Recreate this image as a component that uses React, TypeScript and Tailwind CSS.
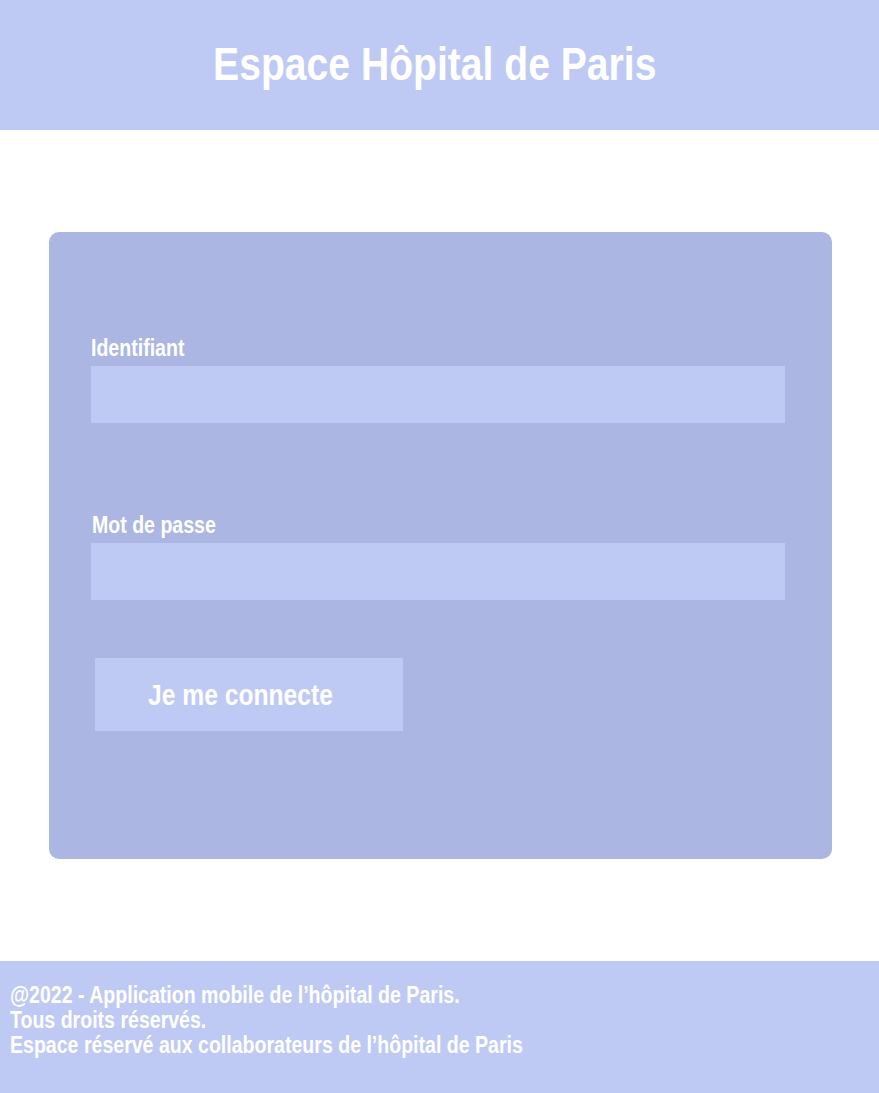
import React from "react";

const font = { fontFamily: '"Liberation Sans", Arial, sans-serif' };

// the reference type is a horizontally condensed Arial bold
const Narrow = ({ children, center = false }: { children: React.ReactNode; center?: boolean }) => (
  <span className={`inline-block scale-x-[0.85] ${center ? "origin-center" : "origin-left"}`}>{children}</span>
);

export default function App() {
  return (
    <div className="min-h-screen bg-white flex flex-col" style={font}>
      <header className="h-[130px] bg-[#bfcaf4] flex items-center justify-center pr-[9px] pb-[2px]">
        <h1 className="text-[46px] font-bold text-white whitespace-nowrap">
          <Narrow center>Espace Hôpital de Paris</Narrow>
        </h1>
      </header>

      <main className="pl-[49px] pr-[47px] pt-[102px] pb-[102px]">
        <div className="bg-[#abb7e2] rounded-[10px] h-[627px] pl-[42px] pr-[47px] pt-[104px]">
          <label className="block text-[23px] font-bold text-white leading-[24px]">
            <Narrow>Identifiant</Narrow>
          </label>
          <input type="text" className="block w-full h-[57px] mt-[6px] bg-[#bfcaf4] outline-none" />

          <label className="block text-[23px] font-bold text-white leading-[24px] mt-[90px] ml-[1px]">
            <Narrow>Mot de passe</Narrow>
          </label>
          <input type="password" className="block w-full h-[57px] mt-[6px] bg-[#bfcaf4] outline-none" />

          <button className="mt-[58px] ml-[4px] w-[308px] h-[73px] bg-[#bfcaf4] text-white text-[29px] font-bold pl-[53px] pt-[3px] text-left">
            <Narrow>Je me connecte</Narrow>
          </button>
        </div>
      </main>

      <footer className="h-[132px] bg-[#bfcaf4] px-[10px] pt-[22px] text-white text-[23px] font-bold leading-[25px] whitespace-nowrap">
        <p><Narrow>@2022 - Application mobile de l’hôpital de Paris.</Narrow></p>
        <p><Narrow>Tous droits réservés.</Narrow></p>
        <p><Narrow>Espace réservé aux collaborateurs de l’hôpital de Paris</Narrow></p>
      </footer>
    </div>
  );
}
